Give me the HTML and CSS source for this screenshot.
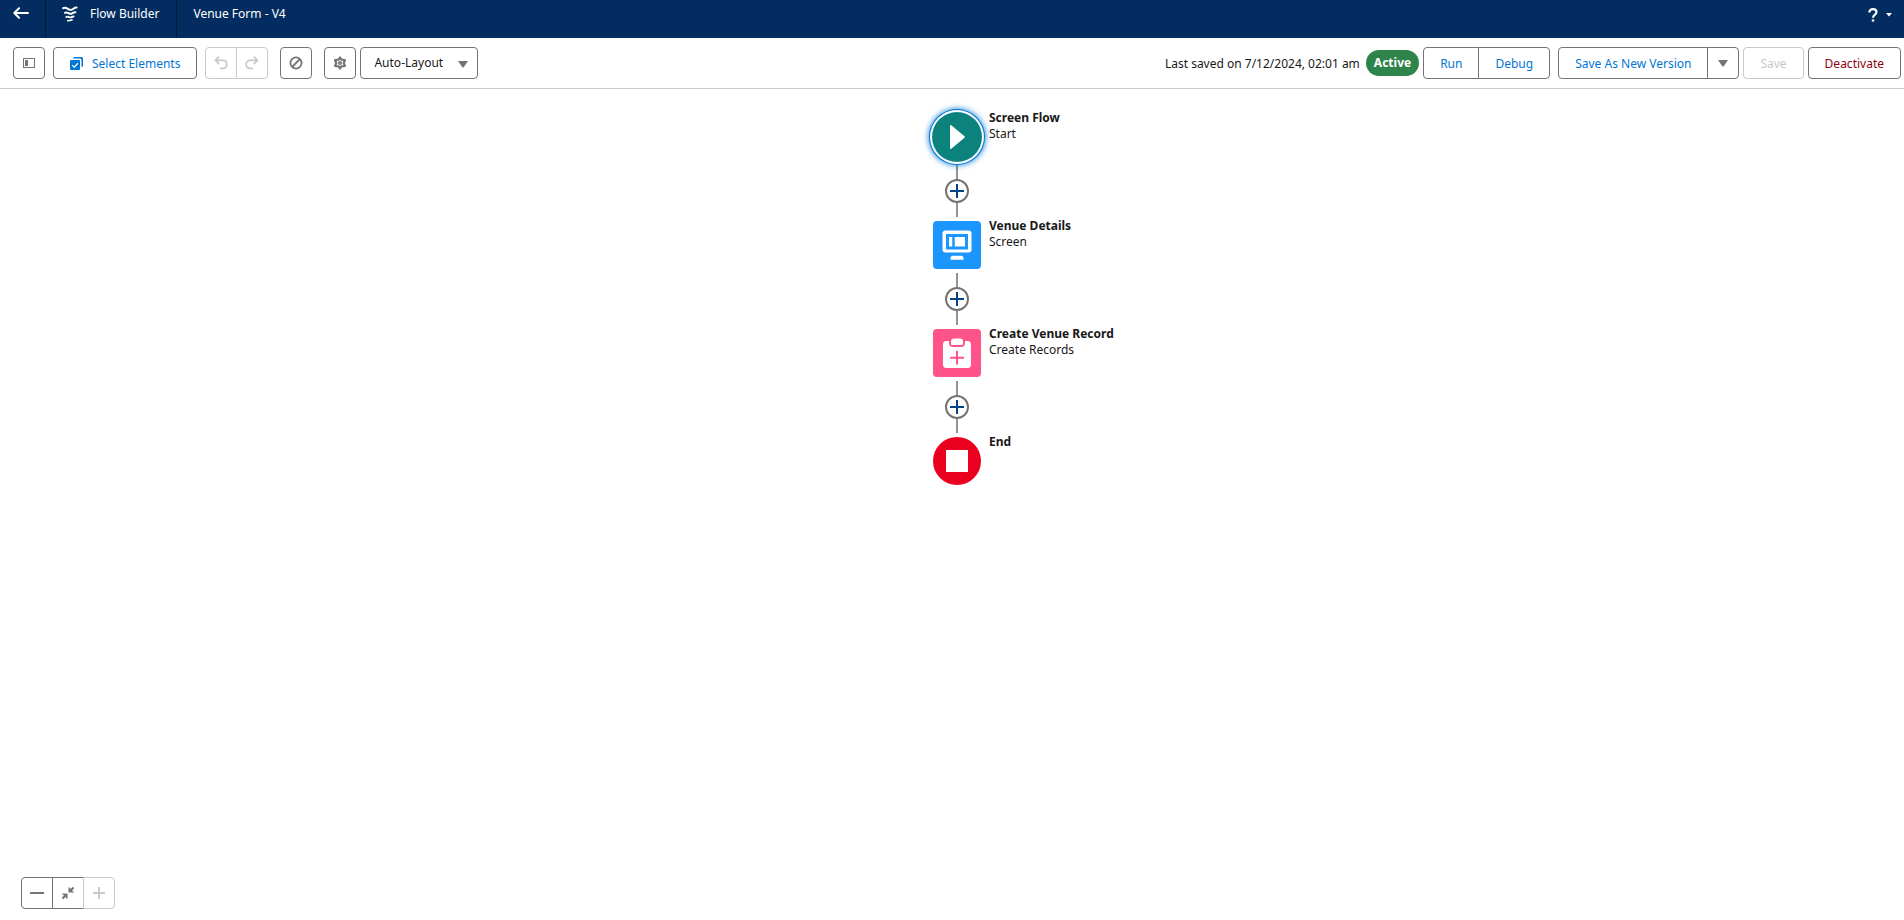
FILE: index.html
```html
<!DOCTYPE html>
<html lang="en">
<head>
<meta charset="utf-8">
<title>Venue Form - V4</title>
<link rel="stylesheet" href="styles.css">
</head>
<body>
<header class="header">
  <a class="header-back" href="#" aria-label="Back">
    <svg width="16" height="12" viewBox="0 0 16 12" fill="none" stroke="#fff" stroke-width="2" stroke-linecap="round" stroke-linejoin="round"><path d="M15 6H1.500M6 1.200L1.300 6L6 10.800"/></svg>
  </a>
  <div class="header-app">
    <svg width="16" height="16" viewBox="0 0 16 16" fill="none" stroke="#fff" stroke-linecap="round" stroke-linejoin="round"><path d="M1.200 2.200C4.500.2 6.500 4.600 9.500 3.800C11.500 3.200 12 1.400 14.600 1.500" stroke-width="2"/><path d="M3 6.800C5.500 5.200 7 8.400 9.500 7.700C11 7.200 11.700 6 13.400 6.200" stroke-width="2"/><path d="M4.200 11C6 9.900 7.500 12 9.300 11.300C10.200 11 10.600 10.400 11.600 10.500" stroke-width="1.800"/><path d="M5.800 14.700C7.300 14.200 8.300 15 10 13.900" stroke-width="1.700"/></svg>
    <span>Flow Builder</span>
  </div>
  <h1 class="header-title">Venue Form - V4</h1>
  <button class="header-help" type="button" aria-label="Help">
    <svg width="10" height="14" viewBox="0 0 10 14" fill="none" stroke="#fff" stroke-width="2.200"><path d="M1.300 4.400C1.300 2.400 2.800 1.200 4.900 1.200C7 1.200 8.500 2.400 8.500 4.200C8.500 6.500 5 6.700 5 9.700"/><path d="M5 11.400V13.600" stroke-width="2.400"/></svg>
    <svg width="6" height="4" viewBox="0 0 6 4" fill="#fff"><path d="M0 0H6L3 3.500Z"/></svg>
  </button>
</header>

<div class="toolbar" role="toolbar" aria-label="Flow tools">
  <div class="tools">
    <button class="btn btn-icon" type="button" aria-label="Toggle toolbox">
      <svg width="12" height="10" viewBox="0 0 12 10"><rect x=".5" y=".5" width="11" height="9" fill="none" stroke="#747474"/><rect x="2" y="2" width="3" height="6" fill="#747474"/></svg>
    </button>
    <button class="btn btn-select" type="button">
      <svg width="13" height="13" viewBox="0 0 13 13"><path d="M3 1.500Q3 0 4.500 0H11.500Q13 0 13 1.500V8.500Q13 10 11.500 10V3Q11.500 1.500 10 1.500H3Z" fill="#0176d3"/><rect y="3" width="10" height="10" rx="1" fill="#0176d3"/><path d="M2.300 8.200L4.300 10.100L7.900 6.300" fill="none" stroke="#fff" stroke-width="1.300"/></svg>
      <span>Select Elements</span>
    </button>
    <div class="group">
      <button class="btn btn-icon" type="button" aria-label="Undo" disabled>
        <svg width="14" height="14" viewBox="0 0 14 14" fill="none" stroke="#c9c9c9" stroke-width="1.700" stroke-linecap="round" stroke-linejoin="round"><path d="M4.700 1.200L1.500 4.400L4.700 7.600M1.800 4.400H9C11.300 4.400 12.800 6 12.800 8.300C12.800 10.700 11.200 12.300 9 12.300H6.600"/></svg>
      </button>
      <button class="btn btn-icon" type="button" aria-label="Redo" disabled>
        <svg width="14" height="14" viewBox="0 0 14 14" fill="none" stroke="#c9c9c9" stroke-width="1.700" stroke-linecap="round" stroke-linejoin="round"><path d="M9.300 1.200L12.500 4.400L9.300 7.600M12.200 4.400H5C2.700 4.400 1.200 6 1.200 8.300C1.200 10.700 2.800 12.300 5 12.300H7.400"/></svg>
      </button>
    </div>
    <button class="btn btn-icon btn-apart" type="button" aria-label="Show errors">
      <svg width="14" height="14" viewBox="0 0 14 14" fill="none" stroke="#747474" stroke-width="1.800"><circle cx="7" cy="7" r="5.600"/><path d="M3 11L11 3"/></svg>
    </button>
    <button class="btn btn-icon btn-apart" type="button" aria-label="Settings">
      <svg width="14" height="14" viewBox="0 0 14 14" fill="none" stroke="#747474"><path d="M7 1.500L8.400 3.700L11.900 4L10.800 7L11.900 10L8.400 10.300L7 12.500L5.600 10.300L2.100 10L3.200 7L2.100 4L5.600 3.700Z" stroke-width="2.200" stroke-linejoin="round"/><circle cx="7" cy="7" r="1.300" stroke-width="1.600"/></svg>
    </button>
    <div class="layout">
      <select class="btn layout-select" aria-label="Layout mode"><option>Auto-Layout</option><option>Free-Form</option></select>
      <svg class="layout-arrow" width="10" height="7" viewBox="0 0 10 7" fill="#747474"><path d="M0 0H10L5.500 6.500H4.500Z"/></svg>
    </div>
  </div>
  <div class="actions">
    <span class="saved">Last saved on 7/12/2024, 02:01 am</span>
    <span class="badge">Active</span>
    <div class="group">
      <button class="btn" type="button">Run</button>
      <button class="btn" type="button">Debug</button>
    </div>
    <div class="group group-save">
      <button class="btn" type="button">Save As New Version</button>
      <button class="btn btn-icon" type="button" aria-label="More save options">
        <svg width="10" height="7" viewBox="0 0 10 7" fill="#747474"><path d="M0 0H10L5.500 6.500H4.500Z"/></svg>
      </button>
    </div>
    <button class="btn" type="button" disabled>Save</button>
    <button class="btn btn-danger" type="button">Deactivate</button>
  </div>
</div>

<main class="canvas">
  <div class="flow">
    <div class="node">
      <svg class="node-icon start" width="50" height="50" viewBox="0 0 50 50"><circle cx="25" cy="25" r="25" fill="#0b827c"/><path d="M18 14Q18 12.500 19.300 13.300L32.500 24.200Q33.500 25 32.500 25.800L19.300 36.700Q18 37.500 18 36Z" fill="#fff"/></svg>
      <div class="node-text"><h2 class="node-title">Screen Flow</h2><p class="node-type">Start</p></div>
    </div>
    <div class="connector"><button class="add" type="button" aria-label="Add element"><svg width="14" height="14" viewBox="0 0 14 14" stroke="#014486" stroke-width="2"><path d="M7 0V14M0 7H14"/></svg></button></div>
    <div class="node">
      <svg class="node-icon" width="48" height="48" viewBox="0 0 48 48"><rect width="48" height="48" rx="4" fill="#1b96ff"/><rect x="9.500" y="9.500" width="29" height="22" rx="3" fill="#fff"/><rect x="14.500" y="14.500" width="19" height="12.500" fill="none" stroke="#1b96ff" stroke-width="3"/><path d="M20.500 15V27" stroke="#1b96ff" stroke-width="2.500"/><path d="M17.500 38.800V37.500Q17.500 34.800 20 34.800H28Q30.500 34.800 30.500 37.500V38.800Z" fill="#fff"/></svg>
      <div class="node-text"><h2 class="node-title">Venue Details</h2><p class="node-type">Screen</p></div>
    </div>
    <div class="connector"><button class="add" type="button" aria-label="Add element"><svg width="14" height="14" viewBox="0 0 14 14" stroke="#014486" stroke-width="2"><path d="M7 0V14M0 7H14"/></svg></button></div>
    <div class="node">
      <svg class="node-icon" width="48" height="48" viewBox="0 0 48 48"><rect width="48" height="48" rx="4" fill="#ff538a"/><path d="M13.500 12H16V14Q16 18 20 18H28Q32 18 32 14V12H34.500Q38 12 38 15.500V35.500Q38 39 34.500 39H13.500Q10 39 10 35.500V15.500Q10 12 13.500 12Z" fill="#fff"/><path d="M18 15V12.500Q18 9.500 21 9.500H27Q30 9.500 30 12.500V15Q30 16 29 16H19Q18 16 18 15Z" fill="#fff"/><path d="M24 22V35.500M17 28.700H31" stroke="#ff538a" stroke-width="2"/></svg>
      <div class="node-text"><h2 class="node-title">Create Venue Record</h2><p class="node-type">Create Records</p></div>
    </div>
    <div class="connector"><button class="add" type="button" aria-label="Add element"><svg width="14" height="14" viewBox="0 0 14 14" stroke="#014486" stroke-width="2"><path d="M7 0V14M0 7H14"/></svg></button></div>
    <div class="node">
      <svg class="node-icon" width="48" height="48" viewBox="0 0 48 48"><circle cx="24" cy="24" r="24" fill="#ea001e"/><rect x="13" y="13" width="22" height="22" fill="#fff"/></svg>
      <div class="node-text"><h2 class="node-title">End</h2></div>
    </div>
  </div>
  <div class="group zoom">
    <button class="btn btn-icon" type="button" aria-label="Zoom out"><svg width="14" height="14" viewBox="0 0 14 14" stroke="#747474" stroke-width="2"><path d="M0 7H14"/></svg></button>
    <button class="btn btn-icon" type="button" aria-label="Zoom to fit"><svg width="14" height="14" viewBox="0 0 14 14" fill="#747474" stroke="#747474" stroke-width="2.200"><path d="M12.500 1.500L9 5M1.500 12.500L5 9"/><path d="M7.500 .8V6.500H13.200ZM.8 7.500H6.500V13.200Z" stroke="none"/></svg></button>
    <button class="btn btn-icon" type="button" aria-label="Zoom in" disabled><svg width="12" height="12" viewBox="0 0 12 12" stroke="#c9c9c9" stroke-width="2"><path d="M0 6H12M6 0V12"/></svg></button>
  </div>
</main>
</body>
</html>
```
FILE: styles.css
```css
* {
  box-sizing: border-box;
}

body {
  margin: 0;
  min-height: 100vh;
  display: flex;
  flex-direction: column;
  background: #fff;
  color: #181818;
  font: 12px/20px "Noto Sans", "Open Sans", sans-serif;
}

h1, h2, p {
  margin: 0;
  font-size: inherit;
  font-weight: inherit;
}

button, select {
  font: inherit;
}

svg {
  display: block;
  flex: none;
}

/* Header */
.header {
  display: flex;
  height: 38px;
  background: #032d60;
  color: #fff;
}

.header-back,
.header-app,
.header-title,
.header-help {
  display: flex;
  align-items: center;
  padding: 0 17px 11px 16px;
}

.header-back {
  width: 46px;
  padding: 0 0 12px 13px;
  border-right: 1px solid #021a3a;
}

.header-app {
  gap: 12px;
  border-right: 1px solid #021a3a;
}

.header-help {
  margin-left: auto;
  padding: 0 12px 8px;
  gap: 8px;
  border: 0;
  background: none;
}

/* Toolbar */
.toolbar {
  display: flex;
  justify-content: space-between;
  align-items: center;
  height: 51px;
  padding: 0 3px 0 13px;
  border-bottom: 1px solid #c9c9c9;
}

.tools,
.actions,
.group {
  display: flex;
  align-items: center;
}

.tools {
  gap: 8px;
}

.actions {
  gap: 4px;
}

.btn {
  display: inline-flex;
  align-items: center;
  justify-content: center;
  height: 32px;
  padding: 1px 16px 0;
  border: 1px solid #747474;
  border-radius: 4px;
  background: #fff;
  color: #0176d3;
  white-space: nowrap;
}

.btn:disabled {
  border-color: #c9c9c9;
  color: #c9c9c9;
}

.btn-icon {
  width: 32px;
  padding: 0;
}

.btn-select {
  gap: 9px;
}

.btn-apart {
  margin-left: 4px;
}

.btn-danger {
  color: #8e030f;
}

.group .btn + .btn {
  margin-left: -1px;
  border-top-left-radius: 0;
  border-bottom-left-radius: 0;
}

.group .btn:not(:last-child) {
  border-top-right-radius: 0;
  border-bottom-right-radius: 0;
}

.group-save {
  margin-left: 4px;
}

.layout {
  position: relative;
  margin-left: -4px;
}

.layout-select {
  appearance: none;
  display: block;
  padding: 0 34px 0 13px;
  color: #181818;
}

.layout-arrow {
  position: absolute;
  top: 14px;
  right: 10px;
  pointer-events: none;
}

.saved {
  padding: 2px 2px 0 0;
}

.badge {
  padding: 3px 8px;
  border-radius: 13px;
  background: #2e844a;
  color: #fff;
  font-weight: 700;
}

/* Canvas */
.canvas {
  flex: 1;
  display: flex;
  flex-direction: column;
  justify-content: space-between;
  padding: 20px 0 11px 10px;
}

.node {
  display: grid;
  grid-template-columns: 1fr 56px 1fr;
  column-gap: 4px;
  min-height: 56px;
}

.node-icon {
  grid-column: 2;
  place-self: center;
}

.start {
  border-radius: 50%;
  box-shadow: 0 0 0 2px #fff, 0 0 0 3px #0176d3, 0 0 6px 3px #0176d3;
}

.node-text {
  padding-top: 1px;
  line-height: 16px;
}

.node-title {
  font-weight: 700;
}

.connector {
  display: flex;
  align-items: center;
  justify-content: center;
  height: 52px;
  background: linear-gradient(#969492, #969492) center / 2px 100% no-repeat;
}

.add {
  display: flex;
  align-items: center;
  justify-content: center;
  width: 24px;
  height: 24px;
  padding: 0;
  border: 2px solid #747474;
  border-radius: 50%;
  background: #fff;
}

.zoom {
  padding-left: 11px;
}
```
